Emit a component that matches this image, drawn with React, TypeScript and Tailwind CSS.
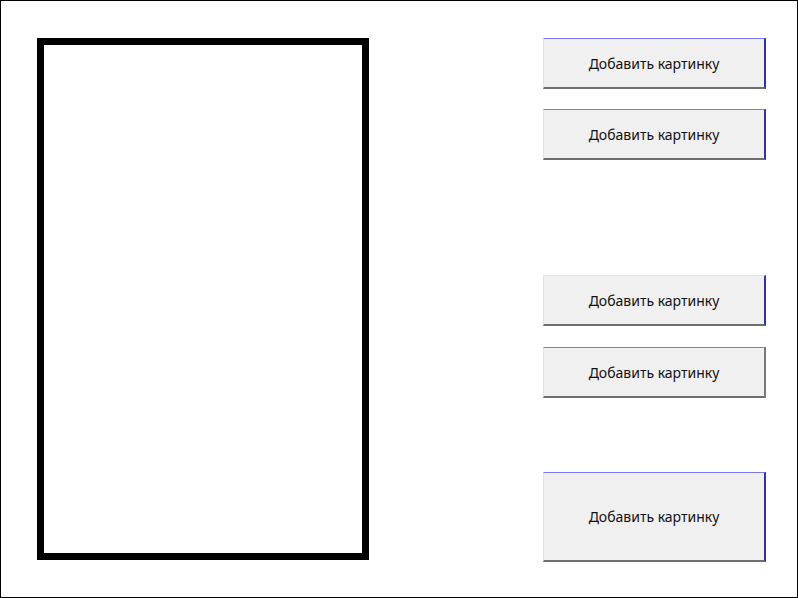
import React from 'react';

type Btn = { h: string; mt: string; top: boolean; right: boolean };

const buttons: Btn[] = [
  { h: 'h-[51px]', mt: 'mt-[37px]', top: true, right: true },
  { h: 'h-[51px]', mt: 'mt-[20px]', top: true, right: true },
  { h: 'h-[51px]', mt: 'mt-[115px]', top: false, right: true },
  { h: 'h-[51px]', mt: 'mt-[21px]', top: true, right: false },
  { h: 'h-[90px]', mt: 'mt-[74px]', top: true, right: true },
];

const PictureButton: React.FC<{ b: Btn }> = ({ b }) => (
  <button
    className={`${b.h} ${b.mt} w-[223px] flex items-center justify-center bg-[#f0f0f0] border-l border-l-[#e3e3e3] border-b-2 border-b-[#6e6e6e] border-t ${
      b.top ? 'border-t-[#7878f0]' : 'border-t-[#e3e3e3]'
    } border-r-2 ${b.right ? 'border-r-[#3030c0]' : 'border-r-[#7a7a7a]'} text-[14px] text-[#111111]`}
    style={{ fontFamily: '"Noto Sans", "Open Sans", sans-serif' }}
  >
    Добавить картинку
  </button>
);

export default function App() {
  return (
    <div className="w-[798px] h-[598px] border border-black bg-white flex">
      <div className="ml-[36px] mt-[37px] w-[332px] h-[522px] border-[7px] border-black" />
      <div className="ml-[174px] flex flex-col">
        {buttons.map((b, i) => (
          <PictureButton key={i} b={b} />
        ))}
      </div>
    </div>
  );
}
